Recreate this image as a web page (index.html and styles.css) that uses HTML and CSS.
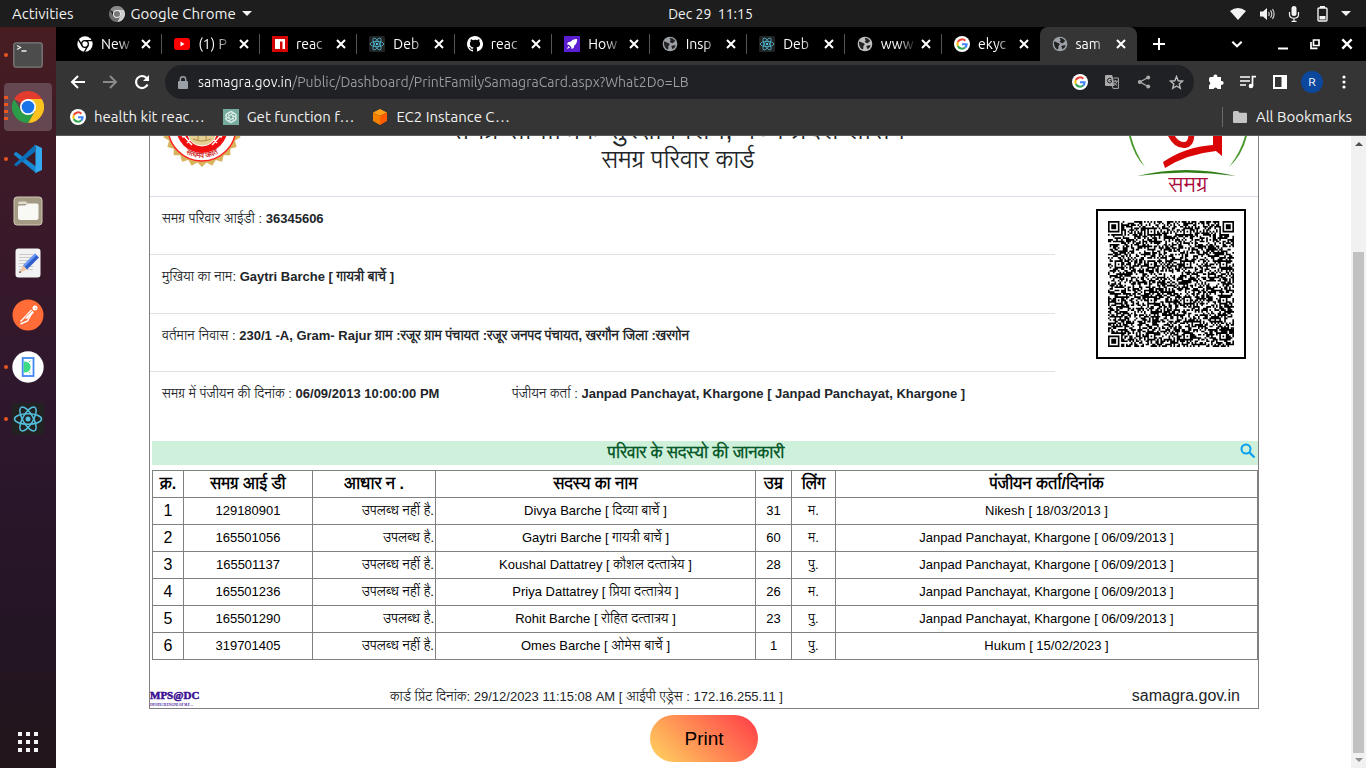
FILE: index.html
```html
<!DOCTYPE html>
<html lang="hi">
<head>
<meta charset="utf-8">
<title>samagra.gov.in</title>
<link rel="stylesheet" href="styles.css">
</head>
<body>
<svg class="defs" aria-hidden="true">
  <symbol id="chrome" viewBox="0 0 48 48">
    <path fill="#e33b2e" d="M24 24 3.2 12A24 24 0 0 1 44.8 12H24z"/>
    <path fill="#fcc31e" d="M44.8 12A24 24 0 0 1 24 48L34.4 30 34.4 18 24 12z"/>
    <path fill="#2b9c48" d="M24 48A24 24 0 0 1 3.2 12L13.6 30 24 35 34.4 30z"/>
    <circle cx="24" cy="24" r="12" fill="#fff"/><circle cx="24" cy="24" r="9.5" fill="#1a73e8"/>
  </symbol>
  <symbol id="chrome-grey" viewBox="0 0 48 48">
    <path fill="#8a8a8a" d="M24 24 3.2 12A24 24 0 0 1 44.8 12H24z"/>
    <path fill="#cfcfcf" d="M44.8 12A24 24 0 0 1 24 48L34.4 30 34.4 18 24 12z"/>
    <path fill="#6d6d6d" d="M24 48A24 24 0 0 1 3.2 12L13.6 30 24 35 34.4 30z"/>
    <circle cx="24" cy="24" r="12" fill="#eee"/><circle cx="24" cy="24" r="9" fill="#777"/>
  </symbol>
  <symbol id="chrome-mono" viewBox="0 0 24 24">
    <circle cx="12" cy="12" r="11.5" fill="#fff"/>
    <g fill="none" stroke="#000" stroke-width="2"><circle cx="12" cy="12" r="5"/><path d="M12 7h11M7.700 14.500 2 5M16.300 14.500 11 24"/></g>
  </symbol>
  <symbol id="google" viewBox="0 0 48 48">
    <circle cx="24" cy="24" r="24" fill="#fff"/>
    <g fill="none" stroke-width="6"><path stroke="#ea4335" d="M34 14A14 14 0 0 0 11.500 18"/><path stroke="#fbbc05" d="M11.500 18a14 14 0 0 0 0 12"/><path stroke="#34a853" d="M11.500 30A14 14 0 0 0 33.500 34.500"/><path stroke="#4285f4" d="M33.500 34.500A14 14 0 0 0 38 25H24"/></g>
  </symbol>
  <symbol id="react" viewBox="0 0 32 32">
    <rect width="32" height="32" rx="3" fill="#222"/>
    <g fill="none" stroke="#53c1de" stroke-width="1.500"><ellipse cx="16" cy="16" rx="13.500" ry="5.200"/><ellipse cx="16" cy="16" rx="13.500" ry="5.200" transform="rotate(60 16 16)"/><ellipse cx="16" cy="16" rx="13.500" ry="5.200" transform="rotate(120 16 16)"/></g>
    <circle cx="16" cy="16" r="2.500" fill="#53c1de"/>
  </symbol>
  <symbol id="globe" viewBox="0 0 24 24">
    <circle cx="12" cy="12" r="11" fill="currentColor"/>
    <path fill="#222" d="M3 8.500c2-.5 3 1 5 1.500s3 1 3.500 2.500-2 1.500-2 3 .5 3-.5 4.500C5 19.500 2.600 14 3 8.500zM12 3c3-.5 6.500 1.500 8 5-2 0-2 1.500-3.500 2.500s-3-.5-4.500-1.500 1.500-1.500 1-3S11 4.500 12 3zM14 15c2-.5 4-1.500 6.500-1-.7 3-2.500 5-5 6 .5-2-1.500-3-1.500-5z"/>
  </symbol>
  <symbol id="close" viewBox="0 0 12 12"><path d="m2 2 8 8m0-8-8 8" stroke="currentColor" stroke-width="2"/></symbol>
</svg>

<header class="topbar">
  <div class="topbar-side">
    <button class="plain">Activities</button>
    <button class="plain app-menu"><svg width="16" height="16"><use href="#chrome-grey"/></svg>Google Chrome<i class="caret"></i></button>
  </div>
  <time>Dec 29&nbsp; 11:15</time>
  <div class="topbar-side system">
    <svg width="16" height="14" viewBox="0 0 16 14"><path fill="#f2f2f2" d="M0 4Q8-2 16 4L8 13z"/></svg>
    <svg width="16" height="14" viewBox="0 0 16 14"><path fill="#f2f2f2" d="M1 4.500h3L8 1v12L4 9.500H1z"/><path d="M9.500 5q1.500 2 0 4M11.500 3.300q2.600 3.700 0 7.400M13.500 2q3.200 5 0 10" fill="none" stroke="#ccc" stroke-width="1.200"/></svg>
    <svg width="12" height="16" viewBox="0 0 12 16"><rect x="3.500" width="5" height="10" rx="2.500" fill="#f2f2f2"/><path d="M1.500 6v2.500c0 5 9 5 9 0V6M6 12v3M3.500 15.300h5" fill="none" stroke="#f2f2f2" stroke-width="1.200"/></svg>
    <svg class="battery" width="11" height="16" viewBox="0 0 11 16"><rect x="1" y="2" width="9" height="13" rx="1" fill="none" stroke="#f2f2f2" stroke-width="1.400"/><path fill="#f2f2f2" d="M3 0h5v2H3zM2.500 10h6v3.500h-6z"/></svg>
    <i class="caret"></i>
  </div>
</header>

<div class="desktop">
  <nav class="dock" aria-label="Dock">
    <button class="app" aria-label="Terminal"><i class="dots one"></i>
      <svg width="30" height="26" viewBox="0 0 30 26"><rect x=".8" y=".8" width="28.400" height="24.400" rx="2.500" fill="#4c4c4c" stroke="#7c7c7c" stroke-width="1.300"/><path d="m4 3.500 3.500 2L4 7.500M8.500 9h5" fill="none" stroke="#eee" stroke-width="1.300"/></svg></button>
    <button class="app current" aria-label="Google Chrome"><i class="dots four"></i><svg width="32" height="32"><use href="#chrome"/></svg></button>
    <button class="app" aria-label="Visual Studio Code"><i class="dots one"></i>
      <svg width="30" height="30" viewBox="0 0 30 30"><path fill="#1688d2" d="m1 9.500 2-1.800 20 14.800V29L1.200 11z"/><path fill="#0c6fb9" d="M1 20.500 22 .8v7L3.200 22.500z"/><path fill="#32a9ee" d="M21.500.6 29 4v22l-7.500 3.500c.8-.5 1-1 1-2V3c0-1-.2-1.800-1-2.400z"/></svg></button>
    <button class="app" aria-label="Files">
      <svg width="30" height="30" viewBox="0 0 30 30"><rect x="1" y="1" width="28" height="28" rx="3" fill="#a59b85" stroke="#d0c8b5"/><path fill="#e0dccf" d="M5 8c0-1.500.7-2.500 2-2.500h6L15 8z"/><path fill="#f8f8f5" d="M5 11q0-1.500 1.500-1.500H12l3-2h9q1.500 0 1.500 1.500v13q0 2-2 2h-16q-2.500 0-2.500-2z"/></svg></button>
    <button class="app" aria-label="Text Editor">
      <svg width="26" height="30" viewBox="0 0 26 30"><rect x=".5" y=".5" width="25" height="29" rx="3" fill="#f2f2f2"/><path d="M4 6.500h14M4 9.500h14M4 12.500h14M4 15.500h14M4 18.500h14M4 21.500h14" stroke="#ccc"/><path fill="#2e5fcd" d="m8 17.500 12-12 4 4-12 12z"/><path fill="#6f9bf5" d="m8 17.500 12-12 1.500 1.500-12 12z"/><path fill="#edc5a2" d="m8 17.500 4 4L4 25z"/><path fill="#333" d="m4.800 23 1.500 1.200L4 25z"/></svg></button>
    <button class="app" aria-label="Postman">
      <svg width="32" height="32" viewBox="0 0 32 32"><circle cx="16" cy="16" r="15.500" fill="#ff6c37"/><circle cx="23" cy="9" r="2.500" fill="#fff"/><path fill="#fff" d="m19 10.500 3 3-7 6.500-3.500-1.500z"/><path d="m13 18-4.500 4.500M20.500 13l-5 9-7 3" stroke="#fff" stroke-width="1.400" fill="none"/><path d="m13 18.500 7-6.500m3-3 1.500 1" stroke="#ff6c37" stroke-width=".8"/></svg></button>
    <button class="app" aria-label="Screen mirror"><i class="dots one"></i>
      <svg width="32" height="32" viewBox="0 0 32 32"><circle cx="16" cy="16" r="15.700" fill="#fff"/><rect x="10.700" y="7" width="10.800" height="18" fill="#fff" stroke="#4285f4" stroke-width="1.800"/><path fill="#3ddc84" d="M11.600 10.500q7 0 7 5.500t-7 5.500z"/><path d="m17 11 1.500-1.500M17 21l1.500 1.500" stroke="#3ddc84"/></svg></button>
    <button class="app" aria-label="React Native Debugger"><i class="dots one"></i><svg width="32" height="32"><use href="#react"/></svg></button>
    <button class="app show-apps" aria-label="Show applications">
      <svg width="20" height="20" viewBox="0 0 20 20" fill="#f4f4f4"><path d="M0 0h4v4H0zM8 0h4v4H8zM16 0h4v4h-4zM0 8h4v4H0zM8 8h4v4H8zM16 8h4v4h-4zM0 16h4v4H0zM8 16h4v4H8zM16 16h4v4h-4z"/></svg></button>
  </nav>

  <div class="browser">
    <div class="tabstrip">
      <div class="tab"><svg class="fav"><use href="#chrome-mono"/></svg><span class="tab-title">New</span><button class="tab-close" aria-label="Close"><svg><use href="#close"/></svg></button></div>
      <div class="tab"><svg class="fav" viewBox="0 0 16 16"><rect y="2" width="16" height="12" rx="3" fill="#f00"/><path fill="#fff" d="m6.500 5.500 4 2.500-4 2.500z"/></svg><span class="tab-title">(1) P</span><button class="tab-close" aria-label="Close"><svg><use href="#close"/></svg></button></div>
      <div class="tab"><svg class="fav" viewBox="0 0 16 16"><path fill="#d50000" d="M0 0h16v16H0z"/><path fill="#fff" d="M3 3h10v10h-2.500V5.500H8V13H3z"/></svg><span class="tab-title">reac</span><button class="tab-close" aria-label="Close"><svg><use href="#close"/></svg></button></div>
      <div class="tab"><svg class="fav"><use href="#react"/></svg><span class="tab-title">Deb</span><button class="tab-close" aria-label="Close"><svg><use href="#close"/></svg></button></div>
      <div class="tab"><svg class="fav" viewBox="0 0 16 16"><path fill="#fff" d="M8 0C3.580 0 0 3.580 0 8c0 3.540 2.290 6.530 5.470 7.590.4.070.55-.17.55-.38 0-.19-.01-.82-.01-1.490-2.010.37-2.530-.49-2.690-.94-.09-.23-.48-.94-.82-1.130-.28-.15-.68-.52-.01-.53.63-.01 1.080.58 1.230.82.72 1.210 1.870.87 2.330.66.07-.52.28-.87.51-1.070-1.780-.2-3.640-.89-3.640-3.950 0-.87.31-1.590.82-2.150-.08-.2-.36-1.020.08-2.120 0 0 .67-.21 2.200.82A7.600 7.600 0 0 1 8 3.860c.68 0 1.360.09 2 .27 1.530-1.040 2.200-.82 2.200-.82.44 1.100.16 1.920.08 2.120.51.56.82 1.270.82 2.150 0 3.070-1.870 3.750-3.650 3.950.29.25.54.73.54 1.480 0 1.070-.01 1.930-.01 2.200 0 .21.15.46.55.38A8 8 0 0 0 8 0z"/></svg><span class="tab-title">reac</span><button class="tab-close" aria-label="Close"><svg><use href="#close"/></svg></button></div>
      <div class="tab"><svg class="fav" viewBox="0 0 16 16"><path fill="#5b1fd1" d="M0 0h16v16H0z"/><path fill="#fff" d="M13 3q-4-.5-6.500 2.700L4 6.300 3 8.500l2 .2L7.300 11l.2 2 2.200-1 .6-2.500Q13.500 7 13 3zM4.500 10 3 13l3-1.500z"/></svg><span class="tab-title">How</span><button class="tab-close" aria-label="Close"><svg><use href="#close"/></svg></button></div>
      <div class="tab"><svg class="fav globe"><use href="#globe"/></svg><span class="tab-title">Insp</span><button class="tab-close" aria-label="Close"><svg><use href="#close"/></svg></button></div>
      <div class="tab"><svg class="fav"><use href="#react"/></svg><span class="tab-title">Deb</span><button class="tab-close" aria-label="Close"><svg><use href="#close"/></svg></button></div>
      <div class="tab"><svg class="fav globe light"><use href="#globe"/></svg><span class="tab-title">www</span><button class="tab-close" aria-label="Close"><svg><use href="#close"/></svg></button></div>
      <div class="tab"><svg class="fav"><use href="#google"/></svg><span class="tab-title">ekyc</span><button class="tab-close" aria-label="Close"><svg><use href="#close"/></svg></button></div>
      <div class="tab active"><svg class="fav globe"><use href="#globe"/></svg><span class="tab-title">sam</span><button class="tab-close" aria-label="Close"><svg><use href="#close"/></svg></button></div>
      <div class="window-tools">
        <button class="icon" aria-label="New tab"><svg width="14" height="14" viewBox="0 0 14 14"><path d="M7 1v12M1 7h12" stroke="#fff" stroke-width="2"/></svg></button>
        <button class="icon search-tabs" aria-label="Search tabs"><svg width="14" height="14" viewBox="0 0 12 12"><path d="m2 4 4 4 4-4" fill="none" stroke="#fff" stroke-width="1.800"/></svg></button>
        <button class="icon" aria-label="Minimize"><svg width="12" height="12" viewBox="0 0 12 12"><path d="M1 10.500h10" stroke="#fff" stroke-width="2"/></svg></button>
        <button class="icon" aria-label="Restore"><svg width="12" height="12" viewBox="0 0 12 12"><path d="M4.500 2H10v5.500H4.500zM2 4v6.300h6.500" fill="none" stroke="#fff" stroke-width="1.700"/></svg></button>
        <button class="icon" aria-label="Close window"><svg width="14" height="14" viewBox="0 0 12 12"><use href="#close"/></svg></button>
      </div>
    </div>

    <div class="toolbar">
      <button class="icon" aria-label="Back"><svg width="16" height="16" viewBox="0 0 16 16"><path d="M15 8H2M8 2 2 8l6 6" fill="none" stroke="#fff" stroke-width="2"/></svg></button>
      <button class="icon" aria-label="Forward"><svg width="16" height="16" viewBox="0 0 16 16"><path d="M1 8h13M8 2l6 6-6 6" fill="none" stroke="#8a8a8a" stroke-width="2"/></svg></button>
      <button class="icon" aria-label="Reload"><svg width="16" height="16" viewBox="0 0 16 16"><path d="M13.500 10.500A6 6 0 1 1 12.500 4" fill="none" stroke="#fff" stroke-width="2.200"/><path fill="#fff" d="M15 1v6H9z"/></svg></button>
      <div class="omnibox">
        <svg width="10" height="13" viewBox="0 0 10 13"><rect y="5" width="10" height="8" rx="1" fill="#9aa0a6"/><path d="M2.300 5V3.500a2.700 2.700 0 0 1 5.400 0V5" fill="none" stroke="#9aa0a6" stroke-width="1.400"/></svg>
        <input class="url" type="text" aria-label="Address" value="samagra.gov.in/Public/Dashboard/PrintFamilySamagraCard.aspx?What2Do=LB">
        <div class="tools">
        <button class="icon" aria-label="Google"><svg width="16" height="16"><use href="#google"/></svg></button>
        <button class="icon" aria-label="Translate"><svg width="14" height="14" viewBox="0 0 14 14"><path fill="#aaa" d="M0 1q0-1 1-1h6l1.200 3.300L9 11H1q-1 0-1-1z"/><path d="M6.500 4.200A2.300 2.300 0 1 0 6.500 7V5.700H4.600" fill="none" stroke="#222" stroke-width="1"/><path d="M8.500 3h4.900v10.400H8L7.200 11M8 6.200h5M10.300 5v1.200M12 6.200q-1 3-3 4.300M9 7.500q1 2 3 3" fill="none" stroke="#aaa"/></svg></button>
        <button class="icon" aria-label="Share"><svg width="14" height="14" viewBox="0 0 14 14" fill="#aaa"><path d="M11 2.500 3 7l8 4.500" fill="none" stroke="#aaa" stroke-width="1.400"/><circle cx="11.200" cy="2.500" r="2"/><circle cx="2.800" cy="7" r="2"/><circle cx="11.200" cy="11.500" r="2"/></svg></button>
        <button class="icon" aria-label="Bookmark"><svg width="15" height="15" viewBox="0 0 16 16"><path d="m8 1.700 1.800 4.400 4.700.3-3.600 3.100 1.100 4.700L8 11.700l-4 2.500 1.100-4.700L1.500 6.400l4.700-.3z" fill="none" stroke="#bbb" stroke-width="1.500"/></svg></button>
        </div>
      </div>
      <div class="tools">
        <button class="icon" aria-label="Extensions"><svg width="16" height="16" viewBox="0 0 16 16"><path fill="#fff" d="M1 4.500 2 3h3.500a2 2 0 1 1 3.800 0H13v4a2 2 0 1 1 0 3.800V15H9.500a2 2 0 0 0-3.900 0H1v-4a2 2 0 0 0 0-3.700z"/></svg></button>
        <button class="icon" aria-label="Media"><svg width="16" height="14" viewBox="0 0 16 14"><path d="M0 2h10M0 6h10M0 10h6M12.500 11V1.700H16" fill="none" stroke="#fff" stroke-width="1.700"/><circle cx="11" cy="11" r="2.300" fill="#fff"/></svg></button>
        <button class="icon" aria-label="Side panel"><svg width="14" height="14" viewBox="0 0 14 14"><path d="M1 1h12v12H1z" fill="none" stroke="#fff" stroke-width="2"/><path fill="#fff" d="M8.500 1H14v12H8.500z"/></svg></button>
        <button class="icon" aria-label="Profile"><span class="avatar">R</span></button>
        <button class="icon" aria-label="Menu"><svg width="4" height="14" viewBox="0 0 4 14" fill="#fff"><circle cx="2" cy="2" r="1.600"/><circle cx="2" cy="7" r="1.600"/><circle cx="2" cy="12" r="1.600"/></svg></button>
      </div>
    </div>

    <div class="bookmarks">
      <a href="#"><svg width="16" height="16"><use href="#google"/></svg>health kit reac…</a>
      <a href="#"><svg width="16" height="16" viewBox="0 0 16 16"><path fill="#75ac9d" d="M0 0h16v16H0z"/><g fill="none" stroke="#fff" stroke-width=".8"><path id="knot" d="M8 5.600 5.800 6.900V4.700a2.300 2.300 0 0 1 4-1.500"/><use href="#knot" transform="rotate(60 8 8)"/><use href="#knot" transform="rotate(120 8 8)"/><use href="#knot" transform="rotate(180 8 8)"/><use href="#knot" transform="rotate(240 8 8)"/><use href="#knot" transform="rotate(300 8 8)"/><circle cx="8" cy="8" r="5"/></g></svg>Get function f…</a>
      <a href="#"><svg width="16" height="16" viewBox="0 0 16 16"><path fill="#ff9f1a" d="m8 0 7 3.500L8 7 1 3.500z"/><path fill="#f68000" d="m1 3.500 7 3.500v9l-7-4z"/><path fill="#ff5b00" d="M15 3.500 8 7v9l7-4z"/></svg>EC2 Instance C…</a>
      <a href="#" class="all"><svg width="14" height="12" viewBox="0 0 14 12"><path fill="#c4c4c4" d="M0 1.500Q0 0 1.500 0H5l1.500 1.800H13q1 0 1 1V11q0 1-1 1H1q-1 0-1-1z"/></svg>All Bookmarks</a>
    </div>

    <div class="viewport">
      <main class="page">
        <article class="card">
          <header class="card-head">
            <svg class="emblem" width="80" height="80" viewBox="0 0 80 80">
              <g id="petals" fill="#d9b35c"></g>
              <circle cx="40" cy="40" r="34" fill="#fff" stroke="#f22" stroke-width="1.500"/>
              <circle cx="40" cy="40" r="26" fill="#f01010"/>
              <path d="M18 44q8 10 12 14M62 44q-8 10-12 14M20 50l9-4M60 50l-9-4M25 56l6-6M55 56l-6-6" stroke="#fff" stroke-width="1.500" fill="none"/>
              <path fill="#e4cf95" stroke="#fff" d="M28 36h24l2 12q-2 10-14 11-12-1-14-11z"/>
              <path d="M32 46q8-6 16 0M31 52q9 4 18 0M36 42v12M44 42v12" stroke="#b38c41" fill="none"/>
              <path id="motto" d="M9 40a31 31 0 0 0 62 0" fill="none"/>
              <text class="motto"><textPath href="#motto" startOffset="50%">सत्यमेव जयते</textPath></text>
            </svg>
            <div class="headings">
              <h1>समग्र सामाजिक सुरक्षा मिशन, मध्य प्रदेश शासन</h1>
              <h2>समग्र परिवार कार्ड</h2>
            </div>
            <div class="samagra">
              <svg width="124" height="92" viewBox="0 0 124 92">
                <path fill="#4b9a2e" d="M1 42q4 27 18 41Q6 64 3 42zM123 42q-4 27-20 41 15-19 18-41z"/>
                <path fill="none" stroke="#d90a0a" stroke-width="6" d="M42 44q6 18 17 17 8-1 6-17"/>
                <path fill="#dc0505" d="M87 44h9v28l-6-5q-29 3-51 17l-2-6q22-15 50-17z"/>
                <path fill="#2f7d14" d="M11 92q49-12 99 0-50-7-99 0z"/>
              </svg>
              <span>समग्र</span>
            </div>
          </header>

          <section class="details">
            <div class="fields">
              <p class="field">समग्र परिवार आईडी : <b>36345606</b></p>
              <p class="field">मुखिया का नाम: <b>Gaytri Barche [ गायत्री बार्चे ]</b></p>
              <p class="field">वर्तमान निवास : <b>230/1 -A, Gram- Rajur ग्राम :रजूर ग्राम पंचायत :रजूर जनपद पंचायत, खरगौन जिला :खरगोन</b></p>
              <div class="field split">
                <p>समग्र में पंजीयन की दिनांक : <b>06/09/2013 10:00:00 PM</b></p>
                <p>पंजीयन कर्ता : <b>Janpad Panchayat, Khargone [ Janpad Panchayat, Khargone ]</b></p>
              </div>
            </div>
            <div class="qr"><svg viewBox="0 0 77 77" role="img" aria-label="QR"><path id="qr-path"/></svg></div>
          </section>

          <section class="members">
            <div class="members-title">
              <h3>परिवार के सदस्यो की जानकारी</h3>
              <button class="icon" aria-label="Search"><svg width="16" height="16" viewBox="0 0 16 16"><circle cx="6" cy="6" r="4.500" fill="none" stroke="#0aa0ee" stroke-width="2"/><path d="m9.500 9.500 5 5" stroke="#0aa0ee" stroke-width="2.300"/></svg></button>
            </div>
            <table>
              <colgroup><col class="c-no"><col class="c-id"><col class="c-aadhaar"><col class="c-name"><col class="c-age"><col class="c-sex"><col></colgroup>
              <thead><tr><th>क्र.</th><th>समग्र आई डी</th><th>आधार न .</th><th>सदस्य का नाम</th><th>उम्र</th><th>लिंग</th><th>पंजीयन कर्ता/दिनांक</th></tr></thead>
              <tbody>
                <tr><td>1</td><td>129180901</td><td>उपलब्ध नहीं है.</td><td>Divya Barche [ दिव्या बार्चे ]</td><td>31</td><td>म.</td><td>Nikesh [ 18/03/2013 ]</td></tr>
                <tr><td>2</td><td>165501056</td><td>उपलब्ध है.</td><td>Gaytri Barche [ गायत्री बार्चे ]</td><td>60</td><td>म.</td><td>Janpad Panchayat, Khargone [ 06/09/2013 ]</td></tr>
                <tr><td>3</td><td>165501137</td><td>उपलब्ध नहीं है.</td><td>Koushal Dattatrey [ कौशल दत्&zwj;तात्रेय ]</td><td>28</td><td>पु.</td><td>Janpad Panchayat, Khargone [ 06/09/2013 ]</td></tr>
                <tr><td>4</td><td>165501236</td><td>उपलब्ध नहीं है.</td><td>Priya Dattatrey [ प्रिया दत्&zwj;तात्रेय ]</td><td>26</td><td>म.</td><td>Janpad Panchayat, Khargone [ 06/09/2013 ]</td></tr>
                <tr><td>5</td><td>165501290</td><td>उपलब्ध है.</td><td>Rohit Barche [ रोहित दत्&zwj;तात्रय ]</td><td>23</td><td>पु.</td><td>Janpad Panchayat, Khargone [ 06/09/2013 ]</td></tr>
                <tr><td>6</td><td>319701405</td><td>उपलब्ध नहीं है.</td><td>Omes Barche [ ओमेस बार्चे ]</td><td>1</td><td>पु.</td><td>Hukum [ 15/02/2023 ]</td></tr>
              </tbody>
            </table>
          </section>

          <footer class="card-foot">
            <div class="mpsedc"><strong>MPS@DC</strong><small>INFOTECH ENGINE OF M.P. ...</small></div>
            <p class="printed">कार्ड प्रिंट दिनांक: 29/12/2023 11:15:08 AM [ आईपी एड्रेस : 172.16.255.11 ]</p>
            <p class="site">samagra.gov.in</p>
          </footer>
        </article>
        <button class="print">Print</button>
      </main>
      <div class="scrollbar" aria-hidden="true"><i class="arrow up"></i><i class="thumb"></i><i class="arrow down"></i></div>
    </div>
  </div>
</div>
<script src="script.js"></script>
</body>
</html>
```
FILE: styles.css
```css
* { box-sizing: border-box; }
html, body { height: 100%; }
body {
  margin: 0;
  display: flex;
  flex-direction: column;
  overflow: hidden;
  font-family: "Liberation Sans", Arial, "Lohit Devanagari", "Noto Sans Devanagari", sans-serif;
  background: #fff;
}
h1, h2, h3, p { margin: 0; font-weight: 400; }
button { font: inherit; color: inherit; background: none; border: 0; padding: 0; }
svg { display: block; flex: none; }
.defs { position: absolute; width: 0; height: 0; }

/* Desktop top bar */
.topbar {
  flex: 0 0 27px;
  display: grid;
  grid-template-columns: 1fr auto 1fr;
  align-items: center;
  padding: 0 15px 0 12px;
  background: #1d1d1d;
  color: #f2f2f2;
  font: 15px/20px Ubuntu, "Noto Sans", sans-serif;
}
.topbar time { padding-left: 58px; font-size: 14px; }
.topbar-side { display: flex; align-items: center; gap: 35px; }
.app-menu { display: flex; align-items: center; gap: 6px; }
.system { justify-content: flex-end; gap: 13px; }
.caret { border: 5px solid transparent; border-top-color: #f2f2f2; border-bottom: 0; }
.battery { margin-left: 4px; }

.desktop { flex: 1; min-height: 0; display: flex; }

/* Dock */
.dock {
  flex: 0 0 56px;
  display: flex;
  flex-direction: column;
  gap: 4px;
  padding: 4px 4px 2px;
  background: linear-gradient(#471d21, #3a1929 25%, #2e172d 52%, #241525 80%, #22151a);
}
.app {
  position: relative;
  flex: 0 0 48px;
  display: flex;
  align-items: center;
  justify-content: center;
  border-radius: 4px;
}
.app.current { background: #644750; }
.show-apps { margin-top: auto; }
.dots { position: absolute; left: 0; width: 4px; background: radial-gradient(circle, #e95420 2px, transparent 2px) 0 0 / 4px 100%; }
.dots.one { height: 4px; background: #e95420; border-radius: 2px; }
.dots.four { top: 11px; height: 28px; background-size: 4px 7px; }

/* Browser chrome */
.browser { flex: 1; min-width: 0; display: flex; flex-direction: column; font-family: Ubuntu, "Noto Sans", sans-serif; }
.tabstrip { flex: 0 0 34px; display: flex; padding-left: 9px; background: #000; color: #fff; }
.tab {
  position: relative;
  flex: 0 1 240px;
  min-width: 0;
  display: flex;
  align-items: center;
  padding: 0 6px 0 12px;
  font-size: 14px;
  line-height: 20px;
}
.tab::after { content: ""; position: absolute; right: 0; top: 7px; width: 1px; height: 20px; background: #555; }
.tab:nth-child(10)::after, .tab.active::after { display: none; }
.tab.active { background: #353535; border-radius: 8px 8px 0 0; }
.fav { width: 16px; height: 16px; margin-right: 8px; }
.globe { color: #9aa0a6; }
.globe.light { color: #c0c0c0; }
.tab-title {
  flex: 1;
  min-width: 0;
  white-space: nowrap;
  -webkit-mask-image: linear-gradient(90deg, #000 50%, transparent);
  mask-image: linear-gradient(90deg, #000 50%, transparent);
}
.tab-close { padding: 4px; }
.tab-close svg { width: 12px; height: 12px; }
.window-tools { flex: 0 0 229px; display: flex; align-items: center; padding: 0 10px 0 13px; }
.icon { display: flex; align-items: center; justify-content: center; flex: none; }
.window-tools .icon { width: 18px; margin-right: 14px; }
.window-tools .icon.search-tabs { margin-left: auto; margin-right: 28px; }
.window-tools .icon:last-child { margin-right: 0; }

.toolbar { flex: 0 0 42px; display: flex; align-items: center; padding: 0 6px; background: #353535; }
.toolbar .icon { width: 32px; }
.omnibox { flex: 1; height: 34px; display: flex; align-items: center; gap: 10px; padding: 0 2px 0 13px; margin: 0 6px 0 7px; border-radius: 17px; background: #202124; }
.url {
  flex: 1;
  min-width: 0;
  padding: 0;
  border: 0;
  outline: 0;
  font: 14px/20px Ubuntu, "Noto Sans", sans-serif;
  color: transparent;
  background: linear-gradient(90deg, #fff 94px, #9a9da1 94px);
  -webkit-background-clip: text;
  background-clip: text;
}
.tools { display: flex; align-items: center; }
.avatar { width: 22px; height: 22px; border-radius: 50%; background: #0b479d; color: #fff; font-size: 12px; line-height: 22px; text-align: center; }

.bookmarks {
  flex: 0 0 33px;
  display: flex;
  align-items: center;
  gap: 18px;
  padding: 0 14px 5px;
  background: #353535;
  border-bottom: 1px solid #5c5a5e;
}
.bookmarks a { display: flex; align-items: center; gap: 8px; color: #f1f1f1; font-size: 15px; line-height: 20px; text-decoration: none; }
.bookmarks .all { margin-left: auto; padding-left: 10px; border-left: 1px solid #6a6a6a; gap: 9px; }

/* Page */
.viewport { flex: 1; min-height: 0; display: flex; overflow: hidden; background: #fff; font-family: "Liberation Sans", Arial, "Lohit Devanagari", "Noto Sans Devanagari", sans-serif; }
.page { flex: 1; min-width: 0; display: flex; flex-direction: column; padding: 0 92px 0 93px; color: #212529; }
.card { border: 1px solid #808080; border-top: 0; }
.card-head { height: 61px; overflow: hidden; display: grid; grid-template: 100% / 98px 1fr 150px; align-items: end; border-bottom: 1px solid #dcdce8; }
.emblem { margin: 0 0 29px 12px; }
.motto { font-size: 7px; font-weight: 700; fill: #c22; text-anchor: middle; }
.headings { padding-bottom: 22px; text-align: center; white-space: nowrap; }
.headings h1 { font-size: 27px; line-height: 32px; }
.headings h2 { font-size: 24px; line-height: 28px; }
.samagra { width: 124px; margin: 0 8px 2px auto; text-align: center; color: #a80a3c; font-size: 22px; line-height: 18px; }

.details { display: flex; justify-content: space-between; height: 244px; }
.fields { flex: 0 1 905px; height: 233px; display: grid; grid-template-rows: repeat(4, 1fr); font-size: 13px; line-height: 20px; }
.field { padding: 12px 12px 0; border-bottom: 1px solid #dee2e6; }
.field:last-child { border-bottom: 0; }
.split { display: grid; grid-template-columns: 350px 1fr; }
.qr { flex: none; width: 150px; height: 150px; margin: 12px; padding: 10px; border: 2px solid #000; }
.qr svg { width: 126px; height: 126px; }

.members { padding-left: 2px; }
.members-title { height: 24px; display: flex; align-items: center; background: #cff1dc; color: #0b5a2b; }
.members-title h3 { flex: 1; text-align: center; font-size: 16px; line-height: 24px; font-weight: 700; }
.members-title .icon { padding: 0 2px 4px 0; }
table { width: 100%; margin-top: 5px; border-collapse: collapse; table-layout: fixed; color: #000; font-size: 13px; line-height: 20px; }
th, td { height: 27px; padding: 0 1px; border: 1px solid #808080; text-align: center; white-space: nowrap; }
th, td:first-child { font-size: 16px; }
td:nth-child(3) { text-align: right; }
.c-no { width: 31px; }
.c-id { width: 129px; }
.c-aadhaar { width: 123px; }
.c-name { width: 320px; }
.c-age { width: 36px; }
.c-sex { width: 44px; }

.card-foot { height: 48px; display: flex; align-items: flex-end; }
.mpsedc { flex: 0 0 240px; display: flex; flex-direction: column; color: #3b0f92; font-family: "Liberation Serif", serif; }
.mpsedc strong { font-size: 11px; line-height: 16px; -webkit-text-stroke: 0.5px currentColor; }
.mpsedc small { font-size: 3px; line-height: 5px; font-weight: 700; }
.printed { font-size: 13px; line-height: 22px; }
.site { margin-left: auto; padding-right: 18px; font-size: 16px; line-height: 24px; }
.print { align-self: center; margin-top: 6px; padding: 0 34px; border-radius: 24px; background: linear-gradient(45deg, #ffd55f, #ff4a4a 90%); color: #000; font-size: 19px; line-height: 47px; }

.scrollbar { flex: 0 0 15px; display: flex; flex-direction: column; align-items: center; padding: 6px 0; background: #f1f1f1; }
.arrow { border: 4px solid transparent; }
.arrow.up { border-bottom: 4px solid #505050; border-top: 0; }
.arrow.down { border-top: 4px solid #909090; border-bottom: 0; }
.thumb { flex: 1; width: 11px; margin: 106px 0 5px; background: #c1c1c1; }
```
FILE: script.js
```js
// Petals round the emblem
const petals = [];
for (let i = 0; i < 24; i++) {
  petals.push(`<path d="M34 70h12l1 3-7 7-7-7z" transform="rotate(${i * 15} 40 40)"/>`);
}
document.getElementById("petals").innerHTML = petals.join("");

// Version 15 code: 77 modules, alignment marks at 6, 26, 48 and 70
const size = 77;
const marks = [6, 26, 48, 70];
let seed = 36345606;
const random = () => {
  seed = (seed * 1103515245 + 12345) % 2147483648;
  return seed / 2147483648;
};
const grid = Array.from({ length: size }, () => Array.from({ length: size }, () => random() < 0.52));
const ring = (cx, cy, rings) => {
  const r = rings.length - 1;
  for (let y = -r; y <= r; y++) {
    for (let x = -r; x <= r; x++) {
      if (grid[cy + y] && grid[cy + y][cx + x] !== undefined) {
        grid[cy + y][cx + x] = rings[Math.max(Math.abs(x), Math.abs(y))] === 1;
      }
    }
  }
};
for (let i = 8; i < size - 8; i++) {
  grid[6][i] = i % 2 === 0;
  grid[i][6] = i % 2 === 0;
}
for (const y of marks) {
  for (const x of marks) ring(x, y, [1, 0, 1]);
}
ring(3, 3, [1, 1, 0, 1, 0]);
ring(size - 4, 3, [1, 1, 0, 1, 0]);
ring(3, size - 4, [1, 1, 0, 1, 0]);
let d = "";
grid.forEach((row, y) => row.forEach((on, x) => { if (on) d += `M${x} ${y}h1v1h-1z`; }));
document.getElementById("qr-path").setAttribute("d", d);
```
